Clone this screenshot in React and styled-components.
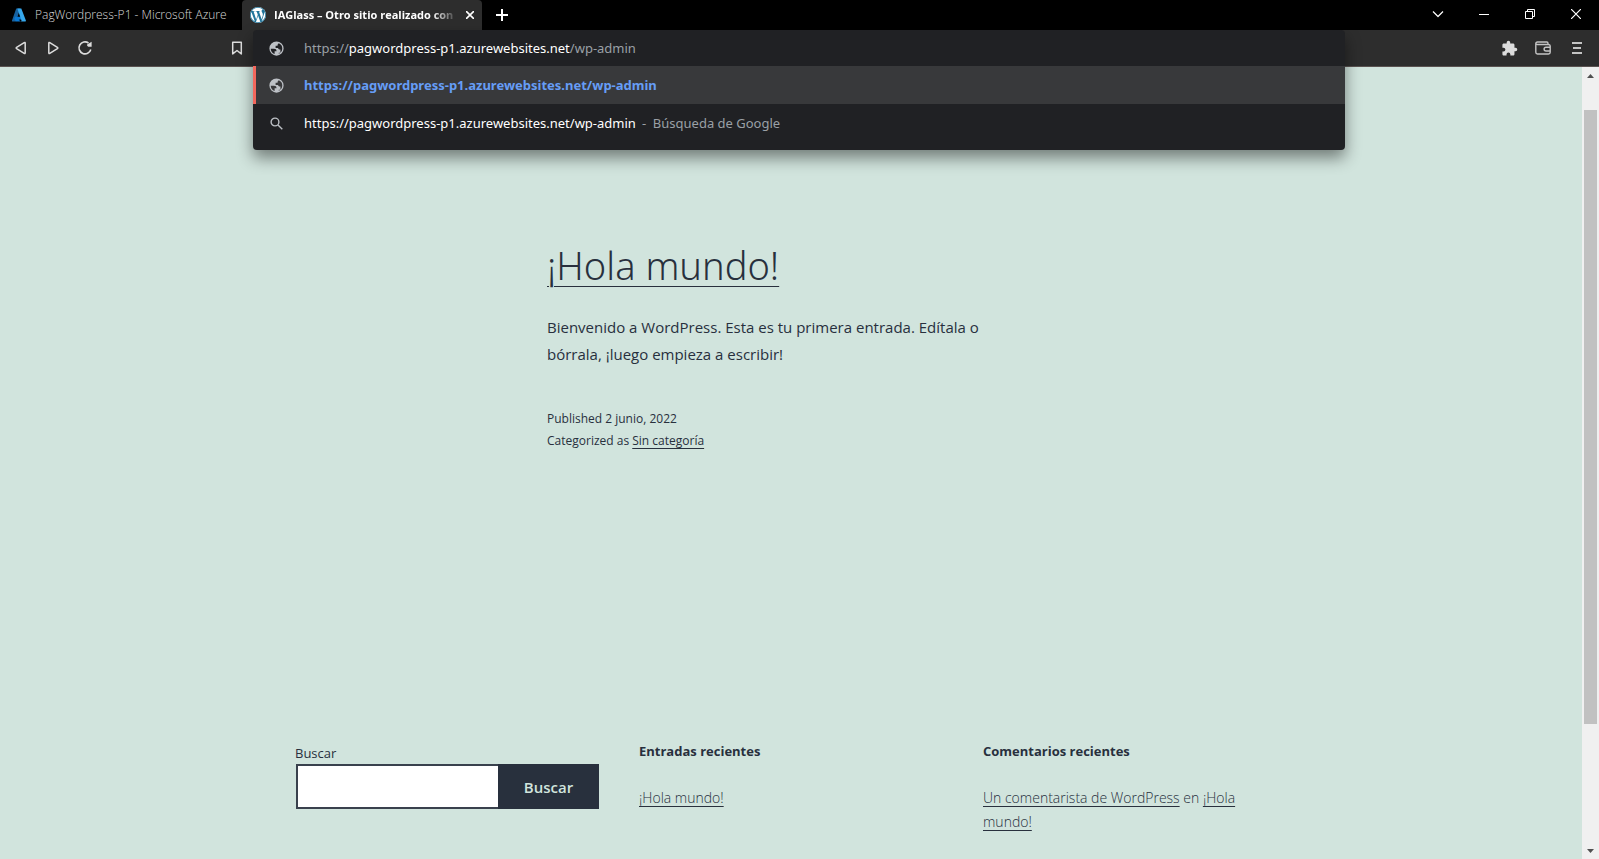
import React from 'react';
import styled, { createGlobalStyle, css } from 'styled-components';

const GlobalStyle = createGlobalStyle`
  *, *::before, *::after { box-sizing: border-box; }
  body {
    margin: 0;
    background: #d1e4dd;
    font-family: "Open Sans", "Noto Sans", sans-serif;
  }
  button, input { font: inherit; }
`;

const Window = styled.div`
  display: flex;
  flex-direction: column;
  min-height: 100vh;
`;

const TabStrip = styled.header`
  display: flex;
  height: 30px;
  background: #000;
`;

const Tab = styled.button`
  display: flex;
  align-items: center;
  gap: 8px;
  width: ${({ $active }) => ($active ? 240 : 242)}px;
  height: 30px;
  padding: 0 8px 0 ${({ $active }) => ($active ? 8 : 11)}px;
  border: 0;
  border-radius: 4px 4px 0 0;
  background: ${({ $active }) => ($active ? '#2d2d2d' : '#000')};
  text-align: left;
`;

const TabTitle = styled.span`
  flex: 1;
  min-width: 0;
  overflow: hidden;
  white-space: nowrap;
  line-height: 20px;
  ${({ $active }) =>
    $active
      ? css`
          color: #fff;
          font-size: 11px;
          font-weight: 700;
          mask-image: linear-gradient(to right, #000 86%, transparent);
        `
      : css`
          color: #d8d8d8;
          font-size: 12px;
          font-weight: 300;
        `}
`;

const NewTab = styled.button`
  width: 40px;
  padding: 0;
  border: 0;
  background: none;
  line-height: 0;
`;

const WindowControls = styled.div`
  display: flex;
  margin-left: auto;
`;

const WindowButton = styled.button`
  display: grid;
  place-items: center;
  width: 46px;
  height: 28px;
  padding: 0;
  border: 0;
  background: none;
`;

const Toolbar = styled.nav`
  display: flex;
  height: 37px;
  border-bottom: 1px solid #5a5250;
  background: #2d2d2d;
`;

const NavGroup = styled.div`
  display: flex;
  align-items: center;
  width: 253px;
  padding: 0 0 0 5px;
`;

const ExtensionGroup = styled(NavGroup)`
  justify-content: flex-end;
  width: 254px;
  padding: 0 5px;
`;

const ToolButton = styled.button`
  display: grid;
  place-items: center;
  width: ${({ $wide }) => ($wide ? 34 : 32)}px;
  height: 32px;
  padding: 0;
  border: 0;
  background: none;
  margin-left: ${({ $end }) => ($end ? 'auto' : 0)};
`;

const AddressArea = styled.div`
  position: relative;
  flex: 1;
`;

const Omnibox = styled.div`
  position: absolute;
  inset: 0 0 auto;
  z-index: 1;
  padding-bottom: 8px;
  border-radius: 4px;
  background: #202124;
  box-shadow: 0 8px 16px rgba(0, 0, 0, 0.45);
`;

const rowLayout = css`
  display: flex;
  align-items: center;
  gap: 20px;
  width: 100%;
  padding: 0 16px;
  font-family: "Noto Sans", sans-serif;
  font-size: 13px;
  line-height: 20px;
  text-align: left;
  white-space: pre;
`;

const AddressRow = styled.div`
  ${rowLayout}
  height: 36px;
`;

const Suggestion = styled.button`
  ${rowLayout}
  height: 38px;
  border: 0;
  background: none;
  color: #fff;
  ${({ $selected }) =>
    $selected &&
    css`
      background: #38393b;
      box-shadow: inset 3px 0 #f2675c;
      color: #669df6;
      font-weight: 700;
    `}
`;

const AddressField = styled.label`
  display: grid;
  flex: 1;
  cursor: text;
`;

const AddressInput = styled.input`
  grid-area: 1 / 1;
  width: 100%;
  padding: 0;
  border: 0;
  outline: 0;
  background: none;
  color: transparent;
`;

const AddressText = styled.span`
  grid-area: 1 / 1;
  color: #9aa0a6;
`;

const Host = styled.span`
  color: #fff;
`;

const Muted = styled.span`
  margin-left: 6px;
  color: #9aa0a6;
`;

const Viewport = styled.div`
  display: flex;
  flex: 1;
`;

const Site = styled.main`
  flex: 1;
  display: flex;
  flex-direction: column;
  color: #28303d;
`;

const Article = styled.article`
  width: 488px;
  max-width: 100%;
  margin: 0 auto;
  padding-top: 170px;
`;

const Title = styled.h2`
  margin: 0;
  font-family: "Noto Sans", sans-serif;
  font-size: 38px;
  font-weight: 300;
  line-height: 56px;
`;

const SiteLink = styled.a`
  color: inherit;
  text-decoration: underline;
  text-decoration-thickness: 1px;
  text-underline-offset: ${({ $offset = 3 }) => $offset}px;
`;

const Excerpt = styled.p`
  margin: 21px 0 0;
  font-size: 15px;
  line-height: 27px;
`;

const Meta = styled.footer`
  margin-top: 40px;
  font-size: 12px;
  line-height: 22px;
`;

const Widgets = styled.aside`
  display: grid;
  grid-template-columns: repeat(3, 1fr);
  align-items: start;
  gap: 40px;
  width: 992px;
  max-width: 100%;
  margin: 287px auto 0;
`;

const SearchForm = styled.form`
  display: grid;
  grid-template-columns: 1fr 101px;
  padding-top: 4px;
`;

const SearchLabel = styled.label`
  grid-column: 1 / -1;
  font-size: 13px;
  line-height: 21px;
`;

const SearchInput = styled.input`
  min-width: 0;
  height: 45px;
  margin-left: 1px;
  padding: 0 8px;
  border: 2px solid #39414d;
  border-right: 0;
  border-radius: 0;
  background: #fff;
`;

const SearchButton = styled.button`
  height: 45px;
  padding: 0;
  border: 0;
  background: #28303d;
  color: #d1e4dd;
  font-size: 15px;
  font-weight: 600;
`;

const WidgetTitle = styled.h3`
  margin: 0;
  font-size: 13px;
  font-weight: 700;
  line-height: 24px;
`;

const WidgetList = styled.ul`
  margin: 23px 0 0;
  padding: 0;
  list-style: none;
  font-size: 14px;
  font-weight: 300;
  line-height: 24px;
`;

const Scrollbar = styled.div`
  display: flex;
  flex-direction: column;
  align-items: center;
  width: 17px;
  background: #f0f0f0;
`;

const ScrollButton = styled.button`
  display: grid;
  place-items: center;
  width: 17px;
  height: 17px;
  padding: 0;
  border: 0;
  background: none;
`;

const Track = styled.div`
  display: grid;
  flex: 1;
  grid-template-rows: 26fr 614fr 118fr;
  width: 13px;
`;

const Thumb = styled.div`
  grid-row: 2;
  background: #c1c1c1;
`;

const AzureIcon = () => (
  <svg width="16" height="16" viewBox="0 0 16 16">
    <path d="M5.2 1.5h4.1L5 14.4H1.6q-1 0-.6-1z" fill="#17619f" />
    <path d="M4 9.8h7.2l-1.2 2.8-2.3.2 2.2 1.8H5L3.3 12z" fill="#0878d4" />
    <path d="M6.3 1.5h4l4.6 12q.3.9-.7.9H9.9q.9-.3.5-1.2z" fill="#36a7ec" />
  </svg>
);

const WordPressIcon = () => (
  <svg width="16" height="16" viewBox="0 0 24 24">
    <circle cx="12" cy="12" r="12" fill="#fff" />
    <path
      fill="#21759b"
      d="M21.469 6.825c.84 1.537 1.318 3.3 1.318 5.175 0 3.979-2.156 7.456-5.363 9.325l3.295-9.527c.615-1.54.82-2.771.82-3.864 0-.405-.026-.78-.07-1.11m-7.981.105c.647-.03 1.232-.105 1.232-.105.582-.075.514-.93-.067-.899 0 0-1.755.135-2.88.135-1.064 0-2.85-.15-2.85-.15-.585-.03-.661.855-.075.885 0 0 .54.061 1.125.09l1.68 4.605-2.37 7.08L5.354 6.9c.649-.03 1.234-.1 1.234-.1.585-.075.516-.93-.065-.896 0 0-1.746.138-2.874.138-.2 0-.438-.008-.69-.015C4.911 3.15 8.235 1.215 12 1.215c2.809 0 5.365 1.072 7.286 2.833-.046-.003-.091-.009-.141-.009-1.06 0-1.812.923-1.812 1.914 0 .89.513 1.643 1.06 2.531.411.72.89 1.643.89 2.977 0 .915-.354 1.994-.821 3.479l-1.075 3.585-3.9-11.61zM12 22.784c-1.059 0-2.081-.153-3.048-.437l3.237-9.406 3.315 9.087c.024.053.05.101.078.149-1.12.393-2.325.609-3.582.609M1.211 12c0-1.564.336-3.05.935-4.39L7.29 21.709C3.694 19.96 1.212 16.271 1.211 12M12 0C5.385 0 0 5.385 0 12s5.385 12 12 12 12-5.385 12-12S18.615 0 12 0"
    />
  </svg>
);

const GlobeIcon = () => (
  <svg width="15" height="15" viewBox="2 2 20 20">
    <path
      fill="#bdc1c6"
      d="M12 2.500a9.500 9.500 0 1 0 0 19 9.500 9.500 0 0 0 0-19zM4.300 12.300H8.500c2.600 0 3.500 1 3.500 3.200h-2.500v3.800A7.700 7.700 0 0 1 4.300 12.300zM15 19.100v-1.600h2.200v-4.200c-1.800 0-2.600-.6-3.200-2h-3.200V8.200h2.600c0-1.600.6-2.300 1.700-3.200a7.700 7.700 0 0 1 4.600 7c0 3.200-1.900 6-4.700 7.100z"
      fillRule="evenodd"
    />
  </svg>
);

const Icon = ({ size = 16, children, width = 1.5, color = '#dcdcdc' }) => (
  <svg
    width={size}
    height={size}
    viewBox={`0 0 ${size} ${size}`}
    fill="none"
    stroke={color}
    strokeWidth={width}
    strokeLinejoin="round"
  >
    {children}
  </svg>
);

export default function App() {
  return (
    <>
      <GlobalStyle />
      <Window>
        <TabStrip>
          <Tab type="button">
            <AzureIcon />
            <TabTitle>PagWordpress-P1 - Microsoft Azure</TabTitle>
          </Tab>
          <Tab type="button" $active>
            <WordPressIcon />
            <TabTitle $active>IAGlass – Otro sitio realizado con</TabTitle>
            <Icon size={8} color="#fff" width={1.6}>
              <path d="m0 0 8 8M8 0 0 8" />
            </Icon>
          </Tab>
          <NewTab type="button" aria-label="Nueva pestaña">
            <Icon size={12} color="#fff" width={2}>
              <path d="M6 0v12M0 6h12" />
            </Icon>
          </NewTab>
          <WindowControls>
            <WindowButton type="button" aria-label="Buscar pestañas">
              <Icon size={12} width={1.2} color="#fff">
                <path d="m1 3.500 5 5 5-5" />
              </Icon>
            </WindowButton>
            <WindowButton type="button" aria-label="Minimizar">
              <Icon size={10} color="#fff" width={1}>
                <path d="M0 5.500h10" />
              </Icon>
            </WindowButton>
            <WindowButton type="button" aria-label="Restaurar">
              <Icon size={10} color="#fff" width={1}>
                <path d="M.5 2.500h7v7h-7zM2.500 2.500v-2h7v7h-2" strokeLinejoin="miter" />
              </Icon>
            </WindowButton>
            <WindowButton type="button" aria-label="Cerrar">
              <Icon size={10} color="#fff" width={1.2}>
                <path d="m0 0 10 10M10 0 0 10" />
              </Icon>
            </WindowButton>
          </WindowControls>
        </TabStrip>

        <Toolbar aria-label="Navegación">
          <NavGroup>
            <ToolButton type="button" aria-label="Atrás">
              <Icon>
                <path d="M12.200 3.200v9.600q0 1.200-1 .6L3.600 8.600q-.8-.6 0-1.200l7.600-4.800q1-.6 1 .6z" />
              </Icon>
            </ToolButton>
            <ToolButton type="button" aria-label="Adelante">
              <Icon>
                <path d="M3.800 3.200v9.600q0 1.200 1 .6l7.600-4.800q.8-.6 0-1.200L4.800 2.600q-1-.6-1 .6z" />
              </Icon>
            </ToolButton>
            <ToolButton type="button" aria-label="Recargar">
              <Icon width={1.6}>
                <path d="M13.800 9.500A6 6 0 1 1 11.500 3" />
                <path d="M14.600 1.800v5h-3.300q-1.700-.6-1.200-2.200z" fill="#dcdcdc" stroke="none" />
              </Icon>
            </ToolButton>
            <ToolButton type="button" aria-label="Marcador" $end>
              <Icon>
                <path d="M3.700 2.300h8.600v11.600L8 10.500l-4.300 3.400z" />
              </Icon>
            </ToolButton>
          </NavGroup>

          <AddressArea>
            <Omnibox>
              <AddressRow>
                <GlobeIcon />
                <AddressField>
                  <AddressInput aria-label="Dirección" />
                  <AddressText>
                    https://<Host>pagwordpress-p1.azurewebsites.net</Host>/wp-admin
                  </AddressText>
                </AddressField>
              </AddressRow>
              <Suggestion type="button" $selected>
                <GlobeIcon />
                <span>https://pagwordpress-p1.azurewebsites.net/wp-admin</span>
              </Suggestion>
              <Suggestion type="button">
                <Icon size={15} color="#bdc1c6" width={1.4}>
                  <circle cx="6" cy="6" r="3.900" />
                  <path d="m9 9 4.300 4.300" />
                </Icon>
                <span>
                  https://pagwordpress-p1.azurewebsites.net/wp-admin
                  <Muted>-{'  '}Búsqueda de Google</Muted>
                </span>
              </Suggestion>
            </Omnibox>
          </AddressArea>

          <ExtensionGroup>
            <ToolButton type="button" aria-label="Extensiones" $wide>
              <svg width="17" height="17" viewBox="0 0 24 24" fill="#dcdcdc">
                <path d="M20.500 11H19V7c0-1.100-.9-2-2-2h-4V3.500a2.500 2.500 0 0 0-5 0V5H4c-1.100 0-2 .9-2 2v3.800h1.500a2.700 2.700 0 0 1 0 5.400H2V20c0 1.100.9 2 2 2h3.800v-1.500a2.700 2.700 0 0 1 5.400 0V22H17c1.100 0 2-.9 2-2v-4h1.500a2.500 2.500 0 0 0 0-5z" />
              </svg>
            </ToolButton>
            <ToolButton type="button" aria-label="Cartera" $wide>
              <Icon width={1.4} color="#c4c4c4">
                <path d="M13 4.500V3.200Q13 2 11.800 2H2.500Q.8 2 .8 3.700v8.600Q.8 14 2.500 14h11q1.700 0 1.700-1.700V6.100q0-1.500-1.700-1.600H2.500Q.8 4.500.8 3.300M15 7.200h-4a1.900 1.900 0 0 0 0 3.800h4" />
              </Icon>
            </ToolButton>
            <ToolButton type="button" aria-label="Menú" $wide>
              <Icon color="#c4c4c4" width={2}>
                <path d="M3 3h10M4 8h8M3 13h10" />
              </Icon>
            </ToolButton>
          </ExtensionGroup>
        </Toolbar>

        <Viewport>
          <Site>
            <Article>
              <Title>
                <SiteLink href="#hola-mundo" $offset={6}>¡Hola mundo!</SiteLink>
              </Title>
              <Excerpt>
                Bienvenido a WordPress. Esta es tu primera entrada. Edítala o bórrala, ¡luego
                empieza a escribir!
              </Excerpt>
              <Meta>
                <div>Published 2 junio, 2022</div>
                <div>
                  Categorized as <SiteLink href="#sin-categoria">Sin categoría</SiteLink>
                </div>
              </Meta>
            </Article>

            <Widgets>
              <SearchForm>
                <SearchLabel htmlFor="search">Buscar</SearchLabel>
                <SearchInput id="search" type="search" />
                <SearchButton type="button">Buscar</SearchButton>
              </SearchForm>
              <section>
                <WidgetTitle>Entradas recientes</WidgetTitle>
                <WidgetList>
                  <li>
                    <SiteLink href="#hola-mundo">¡Hola mundo!</SiteLink>
                  </li>
                </WidgetList>
              </section>
              <section>
                <WidgetTitle>Comentarios recientes</WidgetTitle>
                <WidgetList>
                  <li>
                    <SiteLink href="#comentarista">Un comentarista de WordPress</SiteLink> en{' '}
                    <SiteLink href="#hola-mundo">¡Hola mundo!</SiteLink>
                  </li>
                </WidgetList>
              </section>
            </Widgets>
          </Site>

          <Scrollbar>
            <ScrollButton type="button" aria-label="Subir">
              <svg width="7" height="4" viewBox="0 0 7 4" fill="#505050">
                <path d="M3.500 0 7 4H0z" />
              </svg>
            </ScrollButton>
            <Track>
              <Thumb />
            </Track>
            <ScrollButton type="button" aria-label="Bajar">
              <svg width="7" height="4" viewBox="0 0 7 4" fill="#505050">
                <path d="M0 0h7L3.500 4z" />
              </svg>
            </ScrollButton>
          </Scrollbar>
        </Viewport>
      </Window>
    </>
  );
}
